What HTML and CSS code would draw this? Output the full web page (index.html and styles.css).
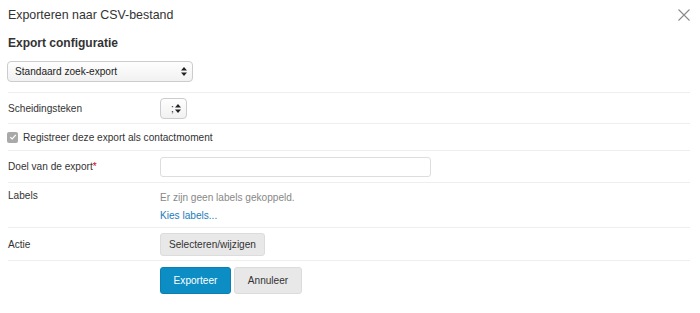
FILE: index.html
```html
<!DOCTYPE html>
<html lang="nl">
<head>
    <meta charset="UTF-8">
    <meta name="viewport" content="width=device-width, initial-scale=1.0">
    <title>Exporteren naar CSV-bestand</title>
    <link rel="stylesheet" href="styles.css">
</head>
<body>
    <div class="modal">
        <div class="modal-header">
            <h2>Exporteren naar CSV-bestand</h2>
            <button class="close" aria-label="Sluiten">
                <svg width="12" height="12" viewBox="0 0 12 12"><path d="M0.5 0.5L11.5 11.5M11.5 0.5L0.5 11.5" stroke="#8a8a8a" stroke-width="1.1" fill="none"/></svg>
            </button>
        </div>

        <h3>Export configuratie</h3>

        <div class="select-wrap wide">
            <select class="select">
                <option>Standaard zoek-export</option>
            </select>
            <svg class="arrows" width="6" height="9" viewBox="0 0 6 9"><path d="M3 0L6 3.5H0Z M3 9L6 5.5H0Z" fill="#222"/></svg>
        </div>

        <div class="form-row row-sep">
            <label>Scheidingsteken</label>
            <div class="select-wrap small">
                <select class="select">
                    <option>;</option>
                </select>
                <svg class="arrows" width="6" height="9" viewBox="0 0 6 9"><path d="M3 0L6 3.5H0Z M3 9L6 5.5H0Z" fill="#222"/></svg>
            </div>
        </div>

        <div class="form-row row-check">
            <label class="check"><span class="box"><svg width="8" height="8" viewBox="0 0 8 8"><path d="M1.3 4.2L3.2 6L6.8 1.8" stroke="#fff" stroke-width="1.2" fill="none"/></svg></span>Registreer deze export als contactmoment</label>
        </div>

        <div class="form-row row-goal">
            <label>Doel van de export<span class="req">*</span></label>
            <input type="text" class="text-input">
        </div>

        <div class="form-row row-labels">
            <label>Labels</label>
            <div class="labels-info">
                <p class="muted">Er zijn geen labels gekoppeld.</p>
                <a href="#">Kies labels...</a>
            </div>
        </div>

        <div class="form-row row-action">
            <label>Actie</label>
            <button class="btn">Selecteren/wijzigen</button>
        </div>

        <div class="form-actions">
            <button class="btn btn-primary">Exporteer</button>
            <button class="btn btn-cancel">Annuleer</button>
        </div>
    </div>
</body>
</html>
```

FILE: styles.css
```css
* {
    margin: 0;
    padding: 0;
    box-sizing: border-box;
    font-family: 'Liberation Sans', Arial, sans-serif;
}

body {
    background-color: #fff;
    color: #333;
    font-size: 10.1px;
}

.modal {
    padding: 0 10px 0 8px;
}

.modal-header {
    display: flex;
    justify-content: space-between;
    align-items: center;
    height: 30px;
}

.modal-header h2 {
    font-size: 12.4px;
    font-weight: normal;
    color: #333;
}

.close {
    background: none;
    border: none;
    display: flex;
}

h3 {
    font-size: 12px;
    font-weight: bold;
    color: #333;
    margin-top: 6px;
    height: 25px;
}

.select-wrap {
    position: relative;
    display: inline-block;
}
.select-wrap.wide {
    width: 186px;
    margin-left: -1px;
    margin-bottom: 10px;
}
.select-wrap.small {
    width: 27px;
}

.select {
    -webkit-appearance: none;
    appearance: none;
    width: 100%;
    height: 21px;
    border: 1px solid #ccc;
    border-radius: 4px;
    background: linear-gradient(to bottom, #fefefe, #f1f1f1);
    font-size: 10.1px;
    color: #222;
    padding: 0 0 0 7px;
}
.select-wrap.small .select {
    padding-left: 10px;
}

.arrows {
    position: absolute;
    right: 6px;
    top: 6px;
    pointer-events: none;
}

.form-row {
    display: flex;
    align-items: center;
    border-top: 1px solid #eeeeee;
}
.form-row > label {
    width: 152px;
    flex-shrink: 0;
}

.row-sep { height: 31px; }
.row-check { height: 27px; }
.row-goal { height: 32px; }
.row-labels {
    height: 45px;
    align-items: flex-start;
    padding-top: 7px;
}
.row-action { height: 33px; }

.check {
    display: flex;
    align-items: center;
    width: auto !important;
    margin-left: -1px;
}
.box {
    width: 11px;
    height: 11px;
    border-radius: 2px;
    background: #a9a9a9;
    margin-right: 5px;
    display: flex;
    align-items: center;
    justify-content: center;
}

.req {
    color: #d0021b;
}

.text-input {
    width: 271px;
    height: 20px;
    border: 1px solid #ddd;
    border-radius: 3px;
    background: #fff;
}

.labels-info p {
    line-height: 16px;
}
.muted {
    color: #888;
}
.labels-info a {
    display: block;
    margin-top: 2px;
    line-height: 16px;
    color: #1a7dba;
    text-decoration: none;
}

.btn {
    height: 23px;
    padding: 0 8px;
    border: 1px solid #dcdcdc;
    border-radius: 3px;
    background-color: #e8e8e8;
    color: #333;
    font-size: 10.1px;
    cursor: pointer;
}

.form-actions {
    display: flex;
    gap: 3px;
    border-top: 1px solid #eeeeee;
    padding: 6px 0 0 152px;
}
.form-actions .btn {
    height: 27px;
}
.btn-primary {
    width: 71px;
    background-color: #0c8ec4;
    border-color: #0a80b2;
    color: #fff;
}
.btn-cancel {
    width: 68px;
}
```
